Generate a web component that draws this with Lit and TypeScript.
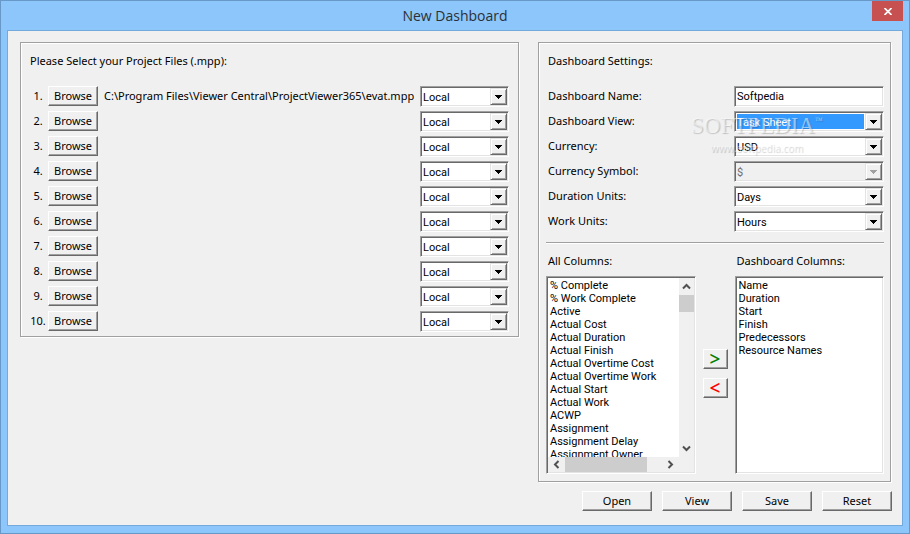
import { LitElement, html, css, nothing } from "lit";
import { customElement, property } from "lit/decorators.js";

const controls = css`
  *, *::before, *::after { box-sizing: border-box; }
  button, input, select {
    font: inherit;
    color: inherit;
    margin: 0;
    border-radius: 0;
    appearance: none;
    outline: none;
  }
  .push {
    height: 20px;
    padding: 0;
    line-height: 18px;
    background: #f0f0f0;
    border: 1px solid;
    border-color: #fff #696969 #696969 #fff;
    box-shadow: inset -1px -1px 0 #a0a0a0;
  }
  .sunken {
    background: #fff;
    border: 1px solid;
    border-color: #a0a0a0 #fff #fff #a0a0a0;
    box-shadow: inset 1px 1px 0 #696969, inset -1px -1px 0 #e3e3e3;
  }
`;

@customElement("combo-box")
export class ComboBox extends LitElement {
  static formAssociated = true;
  static shadowRootOptions = { ...LitElement.shadowRootOptions, delegatesFocus: true };

  @property() value = "";
  @property() label = "";
  @property({ type: Boolean }) active = false;
  @property({ type: Boolean }) disabled = false;

  static styles = [
    controls,
    css`
      :host { display: block; }
      .combo {
        display: grid;
        grid-template-columns: 1fr 17px;
        height: 21px;
        padding: 1px;
      }
      .combo.off { background: #f0f0f0; }
      .field {
        grid-area: 1 / 1 / 2 / 3;
        width: 100%;
        min-width: 0;
        height: 17px;
        border: 0;
        padding: 1px 18px 1px 1px;
        line-height: 17px;
        font-size: 11px;
        font-family: Roboto, sans-serif;
        background: transparent content-box;
        color: #000;
        opacity: 1;
      }
      .combo.on .field { background-color: #3399ff; color: #fff; }
      .combo.off .field { color: #6d6d6d; }
      .arrow {
        grid-area: 1 / 2;
        pointer-events: none;
        z-index: 1;
        display: grid;
        place-items: center;
        height: 17px;
        background: #f0f0f0;
        border: 1px solid;
        border-color: #e3e3e3 #696969 #696969 #e3e3e3;
        box-shadow: inset 1px 1px 0 #fff, inset -1px -1px 0 #a0a0a0;
      }
      .arrow svg { display: block; }
      .off .arrow { color: #a0a0a0; }
    `,
  ];

  render() {
    const state = this.disabled ? "off" : this.active ? "on" : "";
    return html`<div class="combo sunken ${state}">
      <select class="field" aria-label=${this.label} ?disabled=${this.disabled}>
        <option>${this.value}</option>
      </select>
      <span class="arrow"
        ><svg width="7" height="4" shape-rendering="crispEdges">
          <path d="M0 0h7v1h-1v1h-1v1h-1v1h-1v-1h-1v-1h-1v-1h-1z" fill="currentColor" /></svg
      ></span>
    </div>`;
  }
}

const ALL_COLUMNS = [
  "% Complete", "% Work Complete", "Active", "Actual Cost", "Actual Duration",
  "Actual Finish", "Actual Overtime Cost", "Actual Overtime Work", "Actual Start",
  "Actual Work", "ACWP", "Assignment", "Assignment Delay", "Assignment Owner",
];
const DASHBOARD_COLUMNS = ["Name", "Duration", "Start", "Finish", "Predecessors", "Resource Names"];
const FILES = ["C:\\Program Files\\Viewer Central\\ProjectViewer365\\evat.mpp", "", "", "", "", "", "", "", "", ""];
const SETTINGS = [
  { id: "view", label: "Dashboard View:", value: "Task Sheet", active: true },
  { id: "currency", label: "Currency:", value: "USD" },
  { id: "symbol", label: "Currency Symbol:", value: "$", disabled: true },
  { id: "duration", label: "Duration Units:", value: "Days" },
  { id: "work", label: "Work Units:", value: "Hours" },
];

const chevron = (d: string) => html`<svg width="9" height="9" viewBox="0 0 9 9">
  <path d=${d} fill="none" stroke="#505050" stroke-width="2" />
</svg>`;

@customElement("app-root")
export class AppRoot extends LitElement {
  static styles = [
    controls,
    css`
      :host { display: block; }
      .window {
        display: grid;
        grid-template-rows: 29px 1fr;
        min-height: 100vh;
        padding: 0 6px 7px;
        background: #8cc6fa;
        border: 1px solid #6898c8;
        font: 11px/14px "Noto Sans", sans-serif;
        color: #000;
      }
      .titlebar {
        display: grid;
        grid-template-columns: 1fr auto 1fr;
        align-items: start;
      }
      .title {
        grid-column: 2;
        margin: 0;
        font: 400 14px/29px "Open Sans", sans-serif;
        color: #2b3036;
      }
      .close {
        justify-self: end;
        display: grid;
        place-items: center;
        width: 31px;
        height: 20px;
        padding: 0;
        border: 0;
        background: #c75050;
      }
      .client {
        padding: 11px 10px 14px 12px;
        background: #f0f0f0;
        border: 1px solid #74a9db;
      }
      .panels {
        display: grid;
        grid-template-columns: minmax(0, 499fr) minmax(0, 353fr);
        column-gap: 19px;
        align-items: start;
        padding-right: 1px;
      }
      .panel {
        border: 1px solid #a0a0a0;
        box-shadow: 1px 1px 0 #fff, inset 1px 1px 0 #fff;
      }
      .files { padding: 8px 9px 4px; }
      .settings { position: relative; padding: 8px 6px 7px 7px; }
      .heading { margin: 0 0 16px; font: inherit; line-height: 19px; }
      .settings .heading { margin-left: 2px; }
      .rows { display: grid; row-gap: 4px; margin: 0; padding: 0; list-style: none; }
      .file {
        display: grid;
        grid-template-columns: 16px 50px 1fr 89px;
        height: 21px;
        align-items: start;
        line-height: 19px;
      }
      .num { text-align: center; }
      .browse { margin-left: 2px; width: 50px; }
      .path { padding-left: 8px; white-space: nowrap; overflow: hidden; }
      .setting {
        display: grid;
        grid-template-columns: 188px 1fr;
        height: 21px;
        line-height: 19px;
      }
      .setting label { padding-left: 2px; }
      .text {
        width: 100%;
        height: 21px;
        padding: 0 2px;
        font-family: Roboto, sans-serif;
      }
      .rule {
        height: 2px;
        margin: 10px 0 7px;
        border: 0;
        border-top: 1px solid #a0a0a0;
        border-bottom: 1px solid #fff;
      }
      .lists {
        display: grid;
        grid-template-columns: 1fr 39px 1fr;
      }
      .lists label { padding-left: 2px; line-height: 19px; margin-bottom: 6px; }
      .lists .right { grid-column: 3; }
      .listbox {
        display: grid;
        grid-template-columns: minmax(0, 1fr) auto;
        grid-template-rows: 179px 15px;
        padding: 1px;
        height: 198px;
      }
      .list {
        display: block;
        width: 100%;
        height: 100%;
        min-width: 0;
        padding: 1px 0 0;
        border: 0;
        background: transparent;
        font: 11px/13px Roboto, sans-serif;
        overflow: hidden;
        scrollbar-width: none;
      }
      .list.full { grid-row: 1 / 3; }
      .list option {
        height: 13px;
        min-height: 0;
        padding: 0 2px;
        line-height: 13px;
      }
      .bar { display: flex; align-items: center; background: #f0f0f0; }
      .bar.v { flex-direction: column; width: 15px; }
      .bar .end {
        display: grid;
        place-items: center;
        width: 17px;
        height: 15px;
        padding: 0;
        border: 0;
        background: none;
      }
      .bar.v .end { width: 15px; height: 17px; }
      .thumb { background: #cdcdcd; }
      .v .thumb { width: 15px; height: 17px; }
      .h .thumb { width: 82px; height: 15px; }
      .bar .last { margin-left: auto; }
      .bar.v .last { margin: auto 0 0; }
      .corner { background: #f0f0f0; }
      .movers {
        display: grid;
        align-content: center;
        justify-content: center;
        gap: 9px;
        padding-bottom: 4px;
      }
      .move { width: 25px; font: 600 19px/16px "Open Sans", sans-serif; }
      .add { color: #008000; }
      .remove { color: #ff0000; }
      .actions {
        display: flex;
        justify-content: flex-end;
        gap: 10px;
        margin-top: 9px;
      }
      .action { width: 70px; }
      .mark {
        position: absolute;
        top: 68px;
        left: 152px;
        z-index: 2;
        pointer-events: none;
        display: grid;
        justify-items: center;
        color: rgba(255, 255, 255, 0.5);
        text-shadow: 1px 1px 1px rgba(0, 0, 0, 0.2);
        font: 23px/30px "Liberation Serif", serif;
      }
      .mark sup { font-size: 8px; line-height: 8px; vertical-align: 10px; }
      .mark small { font: 10px/14px "Open Sans", sans-serif; }
    `,
  ];

  render() {
    return html`<main class="window">
      <header class="titlebar">
        <h1 class="title">New Dashboard</h1>
        <button class="close" aria-label="Close">
          <svg width="8" height="7" viewBox="0 0 8 7">
            <path d="M.5 0L7.5 7M7.5 0L.5 7" stroke="#fff" stroke-width="1.7" />
          </svg>
        </button>
      </header>
      <div class="client">
        <div class="panels">
          <section class="panel files">
            <h2 class="heading">Please Select your Project Files (.mpp):</h2>
            <ol class="rows">
              ${FILES.map(
                (path, i) => html`<li class="file">
                  <span class="num">${i + 1}.</span>
                  <button class="push browse">Browse</button>
                  <span class="path">${path || nothing}</span>
                  <combo-box value="Local" label="Location of file ${i + 1}"></combo-box>
                </li>`,
              )}
            </ol>
          </section>
          <section class="panel settings">
            <h2 class="heading">Dashboard Settings:</h2>
            <div class="rows">
              <div class="setting">
                <label for="name">Dashboard Name:</label>
                <input id="name" class="text sunken" value="Softpedia" />
              </div>
              ${SETTINGS.map(
                (s) => html`<div class="setting">
                  <label for=${s.id}>${s.label}</label>
                  <combo-box
                    id=${s.id}
                    value=${s.value}
                    label=${s.label}
                    ?active=${s.active}
                    ?disabled=${s.disabled}
                  ></combo-box>
                </div>`,
              )}
            </div>
            <hr class="rule" />
            <div class="lists">
              <label for="all">All Columns:</label>
              <label for="chosen" class="right">Dashboard Columns:</label>
              <div class="listbox sunken">
                <select id="all" class="list" multiple size="14">
                  ${ALL_COLUMNS.map((c) => html`<option>${c}</option>`)}
                </select>
                <div class="bar v">
                  <button class="end" aria-label="Scroll up">${chevron("M1 6.500L4.500 3L8 6.500")}</button>
                  <span class="thumb"></span>
                  <button class="end last" aria-label="Scroll down">${chevron("M1 2.500L4.500 6L8 2.500")}</button>
                </div>
                <div class="bar h">
                  <button class="end" aria-label="Scroll left">${chevron("M6.500 1L3 4.500L6.500 8")}</button>
                  <span class="thumb"></span>
                  <button class="end last" aria-label="Scroll right">${chevron("M2.500 1L6 4.500L2.500 8")}</button>
                </div>
                <span class="corner"></span>
              </div>
              <div class="movers">
                <button class="push move add" aria-label="Add column">&gt;</button>
                <button class="push move remove" aria-label="Remove column">&lt;</button>
              </div>
              <div class="listbox sunken">
                <select id="chosen" class="list full" multiple size="14">
                  ${DASHBOARD_COLUMNS.map((c) => html`<option>${c}</option>`)}
                </select>
              </div>
            </div>
            <div class="mark" aria-hidden="true">
              <span>SOFTPEDIA<sup>™</sup></span>
              <small>www.softpedia.com</small>
            </div>
          </section>
        </div>
        <div class="actions">
          ${["Open", "View", "Save", "Reset"].map((t) => html`<button class="push action">${t}</button>`)}
        </div>
      </div>
    </main>`;
  }
}
